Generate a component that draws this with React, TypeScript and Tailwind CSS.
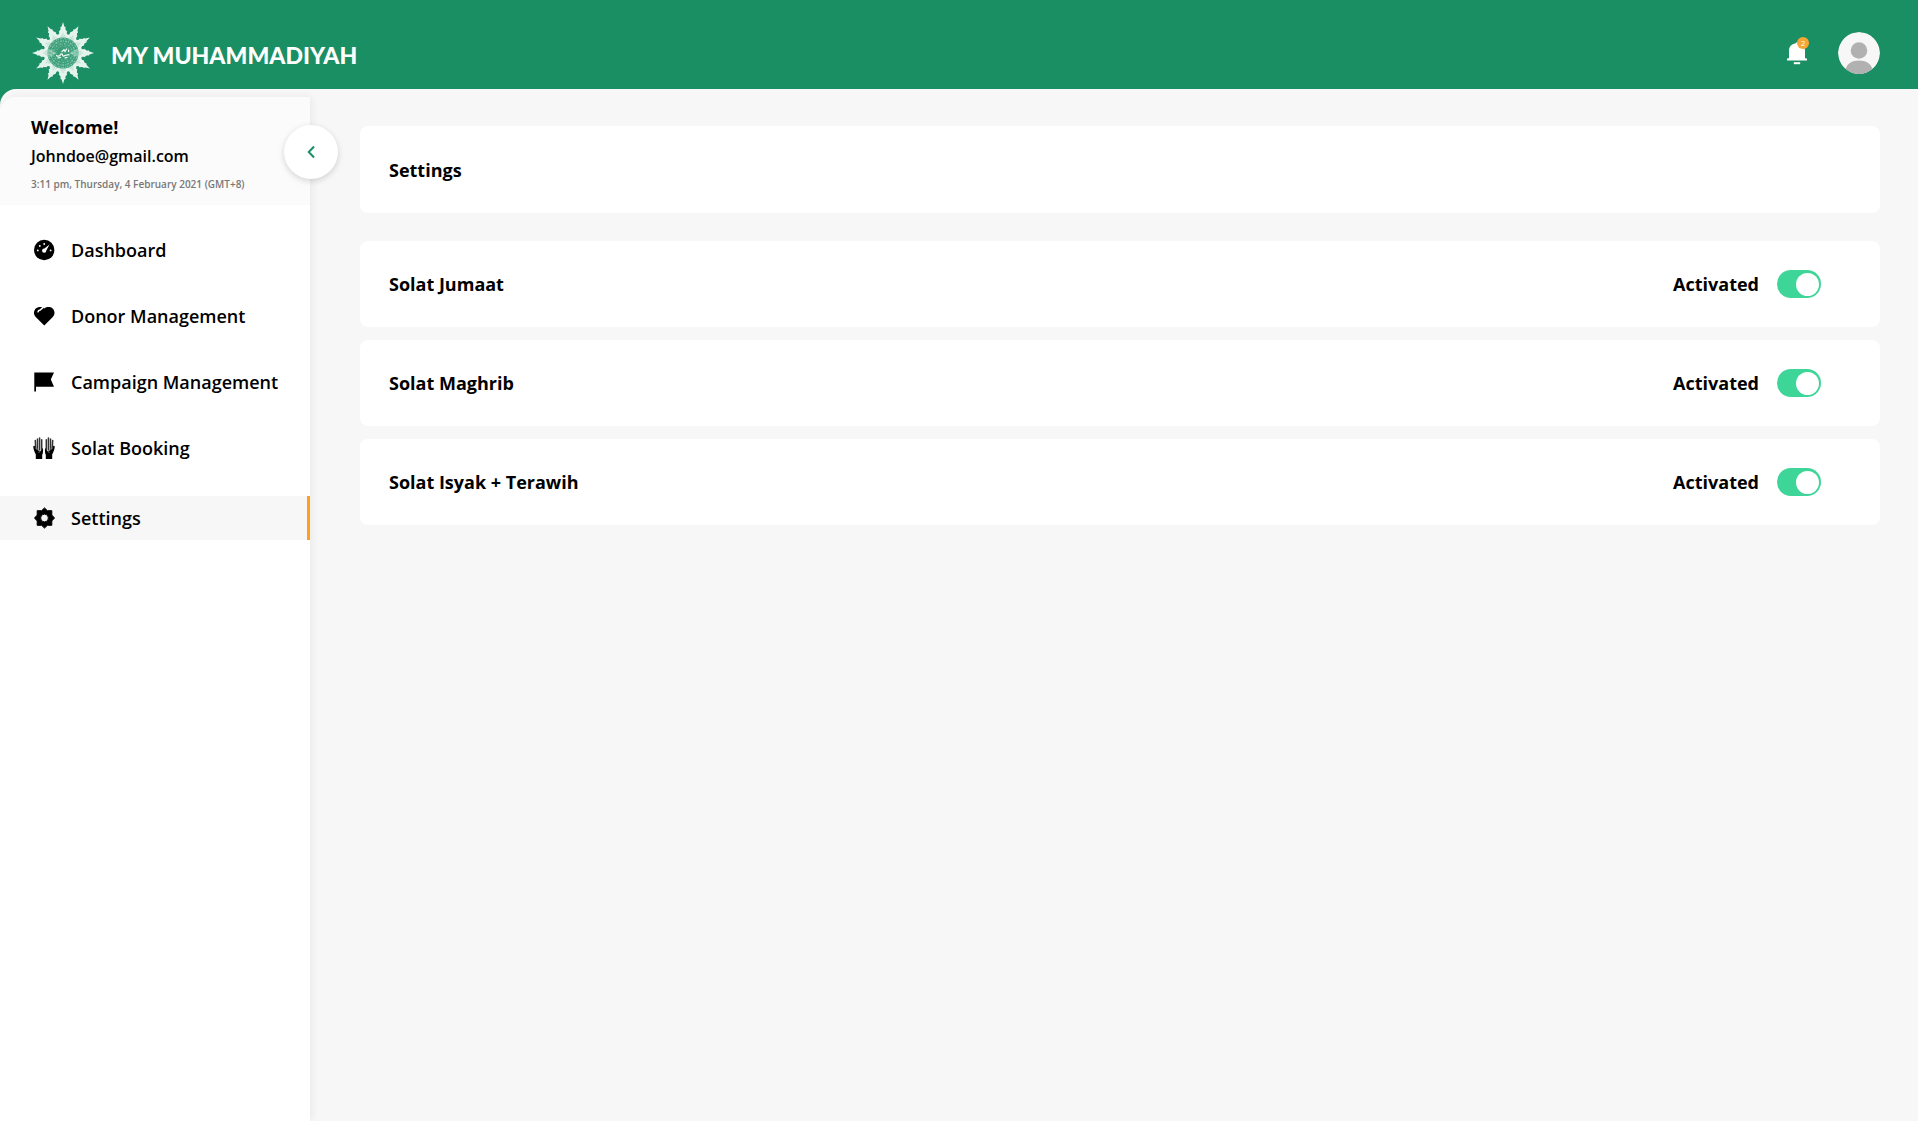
import { useState } from "react";
import type { ReactNode } from "react";

const RAYS = [0, 30, 60, 90, 120, 150, 180, 210, 240, 270, 300, 330];

function SunLogo() {
  return (
    <svg viewBox="0 0 64 64" className="size-16" aria-hidden="true">
      <g fill="#e4f3ec">
        {RAYS.map((a) => (
          <path
            key={a}
            transform={`rotate(${a} 32 32)`}
            d="M32 1 L33.4 5.5 L34.8 6.6 L34.2 8 L36.2 10.8 L35.6 12 L38 15.5 L37 19 H27 L26 15.5 L28.4 12 L27.8 10.8 L29.8 8 L29.2 6.6 L30.6 5.5 Z"
          />
        ))}
      </g>
      <g stroke="#1b8f64" strokeWidth=".5" opacity=".4">
        {RAYS.map((a) => (
          <path key={a} transform={`rotate(${a} 32 32)`} d="M32 12V17M30.6 14l-.8 3M33.4 14l.8 3" />
        ))}
      </g>
      <circle cx="32" cy="32" r="15.5" fill="#3a9f78" />
      <g fill="none" stroke="#b4dccb">
        <circle cx="32" cy="32" r="14.4" strokeWidth="1.4" strokeDasharray="1.6 .9 .7 1.1" opacity=".6" />
        <circle cx="32" cy="32" r="12" strokeWidth="1.5" strokeDasharray="1 1.2 2.1 .8" opacity=".6" />
        <circle cx="32" cy="32" r="9.4" strokeWidth="1.5" strokeDasharray="1.8 1.1 .6 1" opacity=".5" />
        <circle cx="32" cy="32" r="7" strokeWidth="1.2" strokeDasharray=".8 1.3 1.5 1" opacity=".4" />
        <path
          d="M16 32h9M39 32h9M16 30l8 1.500M16 34l8-1.500M48 30l-8 1.500M48 34l-8-1.500M16 28.500l6 1.500M16 35.500l6-1.500M48 28.500l-6 1.500M48 35.500l-6-1.500"
          strokeWidth=".9"
          opacity=".8"
        />
      </g>
      <g fill="none" stroke="#f1faf6" strokeWidth="1.2" strokeLinecap="round">
        <path d="M25.5 34.5c1.5 1.2 3 .8 3.8-.6.8-1.5 2.2-1.2 2.2.2 0 1.2 1.5 1.2 2.4.4l4-.9" />
        <path d="M31 30.5l2-1.8 1 1.8 1.6-2.6M37.5 29v1.5M27 37l2.5-.7M34 36.8l2-.4" />
      </g>
    </svg>
  );
}

function GaugeIcon() {
  return (
    <svg viewBox="0 0 22 22" className="size-[22px]" aria-hidden="true">
      <circle cx="11.200" cy="11" r="10.200" />
      <g fill="#fff">
        <circle cx="4.800" cy="11.400" r=".9" />
        <circle cx="6.800" cy="7" r=".9" />
        <circle cx="11.200" cy="5" r=".9" />
        <circle cx="17.600" cy="11.400" r=".9" />
        <path d="M16.500 5.600 13.300 11.600a2.100 2.100 0 1 1-1.800-2Z" />
      </g>
    </svg>
  );
}

function HeartIcon() {
  return (
    <svg viewBox="0 0 22 22" className="size-[22px]" aria-hidden="true">
      <path d="M11.300 20.500 2.700 12A5.800 5.800 0 0 1 6.200 2.100C7.800 1.900 9.800 2.300 11.300 3.500 13 2 15 1.700 16.800 2.100A5.900 5.900 0 0 1 19.800 12Z" />
      <path d="M4.800 7.300c.3-1.300 1-2 2.400-2.200l2.900-2.700" fill="none" stroke="#fff" strokeWidth="1.500" />
    </svg>
  );
}

function FlagIcon() {
  return (
    <svg viewBox="0 0 22 22" className="size-[22px]" aria-hidden="true">
      <path d="M1.300 1.500H21l-3.200 7L21 15.800H3v4.700H1.300Z" />
    </svg>
  );
}

function Hand() {
  return (
    <>
      <path d="M2.800 22v-4.600C1.700 15.500.6 13 .3 10c-.1-1.400 1.200-1.700 1.700-.5l1.200 2.600 4 2.300 2.700-3.600c.4 2.700.2 5.300-.7 7.200V22Z" />
      <path
        d="M2.700 11.500 2.300 3.400M4.500 12.500V2M6.600 13V1M8.700 12.500V2.800"
        fill="none"
        stroke="#333"
        strokeWidth="1.500"
        strokeLinecap="round"
      />
      <path d="m3.600 11.500 3 2.200-.8 2.300" fill="none" stroke="#888" strokeWidth=".7" />
    </>
  );
}

function HandsIcon() {
  return (
    <svg viewBox="0 0 22 22" className="size-[22px]" aria-hidden="true">
      <Hand />
      <g transform="translate(22 0) scale(-1 1)">
        <Hand />
      </g>
    </svg>
  );
}

function GearIcon() {
  return (
    <svg viewBox="0 0 22 22" className="size-[22px]" aria-hidden="true">
      <path
        fillRule="evenodd"
        strokeWidth="1"
        stroke="currentColor"
        strokeLinejoin="round"
        d="M11.500 .9 14.400 3.700H18.800V8.100L21.500 11 18.800 13.900V18.300H14.400L11.500 21.100 8.600 18.300H4.200V13.900L1.500 11 4.200 8.100V3.700H8.600ZM11.500 7.100a3.900 3.900 0 1 0 0 7.800 3.900 3.900 0 0 0 0-7.800Z"
      />
    </svg>
  );
}

function BellIcon() {
  return (
    <svg viewBox="0 0 20 24" className="h-6 w-5" fill="#fff" aria-hidden="true">
      <path d="M10 1.500c1 0 1.500.5 1.700 1.100C15.500 3.200 18 6 18 9.500V17l1 .5H20v2H0v-2h1L2 17V9.500C2 6 4.500 3.200 8.300 2.600 8.500 2 9 1.500 10 1.500Z" />
      <path d="M6.800 21.200h6.400v2H6.800Z" />
    </svg>
  );
}

function Avatar() {
  return (
    <svg viewBox="0 0 42 42" className="size-[42px] rounded-full" aria-hidden="true">
      <circle cx="21" cy="21" r="21" fill="#f7f7f7" />
      <g fill="#b1b1b1">
        <circle cx="21" cy="18.500" r="8.300" />
        <path d="M7.500 37.500C9 31.500 14 28.500 21 28.500s12 3 13.500 9A21 21 0 0 1 7.500 37.500Z" />
      </g>
    </svg>
  );
}

const NAV: { label: string; icon: ReactNode; active?: boolean }[] = [
  { label: "Dashboard", icon: <GaugeIcon /> },
  { label: "Donor Management", icon: <HeartIcon /> },
  { label: "Campaign Management", icon: <FlagIcon /> },
  { label: "Solat Booking", icon: <HandsIcon /> },
  { label: "Settings", icon: <GearIcon />, active: true },
];

const PRAYERS = [
  { id: "jumaat", label: "Solat Jumaat" },
  { id: "maghrib", label: "Solat Maghrib" },
  { id: "isyak", label: "Solat Isyak + Terawih" },
];

function PrayerRow({ id, label }: { id: string; label: string }) {
  const [on, setOn] = useState(true);
  return (
    <li className="flex h-[86px] items-center justify-between rounded-lg bg-white pr-[59px] pl-[29px]">
      <h2 className="text-lg font-bold">{label}</h2>
      <div className="flex items-center gap-[18px]">
        <label htmlFor={id} className="text-lg font-bold">
          {on ? "Activated" : "Deactivated"}
        </label>
        <input
          id={id}
          type="checkbox"
          role="switch"
          checked={on}
          onChange={(e) => setOn(e.target.checked)}
          className="flex h-7 w-11 cursor-pointer appearance-none items-center rounded-full bg-gray-300 px-0.5 before:size-[23px] before:rounded-full before:bg-white checked:justify-end checked:bg-[#3dd598]"
        />
      </div>
    </li>
  );
}

export default function App() {
  return (
    <div className="flex min-h-screen flex-col bg-[#1b8f64] font-['Open_Sans',sans-serif] text-black">
      <header className="flex h-[89px] items-center justify-between pt-4 pr-[38px] pl-[31px]">
        <a href="#home" className="flex items-center gap-4">
          <SunLogo />
          <span className="pt-1.5 font-['Lato',sans-serif] text-[23px] font-black text-white">MY MUHAMMADIYAH</span>
        </a>
        <div className="flex items-center gap-[31px]">
          <button type="button" aria-label="Notifications" className="relative">
            <BellIcon />
            <span className="absolute -top-1 -right-0.5 flex size-3 items-center justify-center rounded-full bg-[#f9a534] text-[8px] leading-3 text-white">
              2
            </span>
          </button>
          <button type="button" aria-label="Account">
            <Avatar />
          </button>
        </div>
      </header>

      <div className="flex flex-1 rounded-tl-2xl bg-[#f7f7f7] pt-2">
        <aside className="relative w-[310px] shrink-0 rounded-tl-2xl bg-white shadow-[2px_0_8px_rgba(0,0,0,0.06)]">
          <div className="h-[108px] rounded-tl-2xl bg-[#fbfbfb] pt-[18px] pl-[31px]">
            <p className="text-lg leading-6 font-bold">Welcome!</p>
            <p className="pt-[5px] text-base leading-6 font-semibold">Johndoe@gmail.com</p>
            <p className="pt-2 text-[10px] leading-4 font-semibold text-[#777]">
              3:11 pm, Thursday, 4 February 2021 (GMT+8)
            </p>
          </div>
          <button
            type="button"
            aria-label="Collapse menu"
            className="absolute top-7 -right-7 flex size-[54px] items-center justify-center rounded-full bg-white shadow-[0_2px_6px_rgba(0,0,0,0.16)]"
          >
            <svg viewBox="0 0 8 14" className="h-3.5 w-2" fill="none" stroke="#1b8f64" strokeWidth="2" aria-hidden="true">
              <path d="M7 1.500 1.800 7 7 12.500" />
            </svg>
          </button>
          <nav className="pt-[23px]">
            <ul className="flex flex-col gap-[22px]">
              {NAV.map((item) => (
                <li key={item.label} className="last:pt-1">
                  <a
                    href={`#${item.label.toLowerCase().replace(" ", "-")}`}
                    aria-current={item.active ? "page" : undefined}
                    className={`flex h-11 items-center gap-4 pl-[33px] text-lg font-semibold ${
                      item.active ? "border-r-3 border-[#ff9f1c] bg-[#f7f7f7]" : ""
                    }`}
                  >
                    {item.icon}
                    {item.label}
                  </a>
                </li>
              ))}
            </ul>
          </nav>
        </aside>

        <main className="flex-1 pt-[29px] pr-[38px] pl-[50px]">
          <div className="flex h-[87px] items-center rounded-lg bg-white px-[29px]">
            <h1 className="text-lg font-bold">Settings</h1>
          </div>
          <ul className="mt-7 flex flex-col gap-[13px]">
            {PRAYERS.map((p) => (
              <PrayerRow key={p.id} {...p} />
            ))}
          </ul>
        </main>
      </div>
    </div>
  );
}
